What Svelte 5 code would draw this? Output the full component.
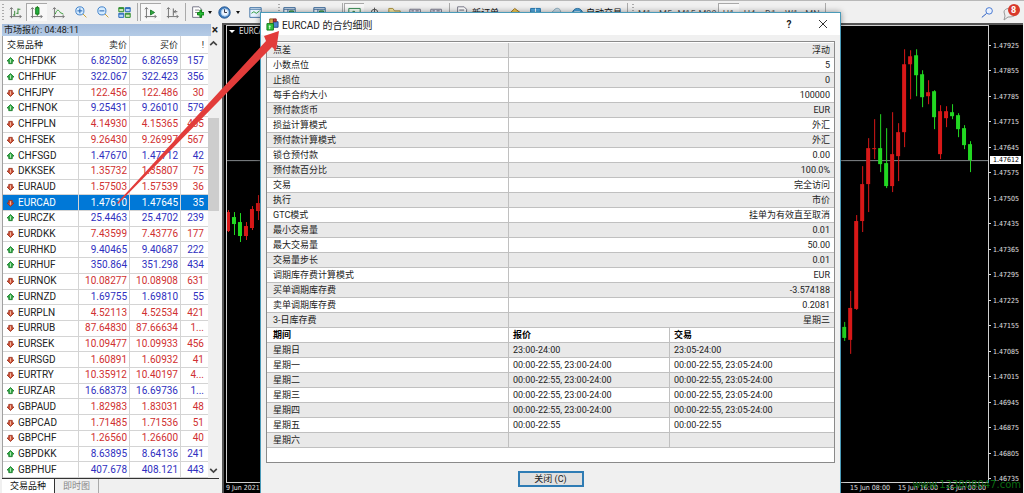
<script>

  let symbols = [
    ["CHFDKK", "6.82502", "6.82659", "157", "up"],
    ["CHFHUF", "322.067", "322.423", "356", "up"],
    ["CHFJPY", "122.456", "122.486", "30", "down"],
    ["CHFNOK", "9.25431", "9.26010", "579", "up"],
    ["CHFPLN", "4.14930", "4.15365", "435", "down"],
    ["CHFSEK", "9.26430", "9.26997", "567", "down"],
    ["CHFSGD", "1.47670", "1.47712", "42", "up"],
    ["DKKSEK", "1.35732", "1.35807", "75", "down"],
    ["EURAUD", "1.57503", "1.57539", "36", "down"],
    ["EURCAD", "1.47610", "1.47645", "35", "down"],
    ["EURCZK", "25.4463", "25.4702", "239", "up"],
    ["EURDKK", "7.43599", "7.43776", "177", "down"],
    ["EURHKD", "9.40465", "9.40687", "222", "up"],
    ["EURHUF", "350.864", "351.298", "434", "up"],
    ["EURNOK", "10.08277", "10.08908", "631", "down"],
    ["EURNZD", "1.69755", "1.69810", "55", "up"],
    ["EURPLN", "4.52113", "4.52534", "421", "down"],
    ["EURRUB", "87.64830", "87.66634", "1...", "down"],
    ["EURSEK", "10.09477", "10.09933", "456", "down"],
    ["EURSGD", "1.60891", "1.60932", "41", "down"],
    ["EURTRY", "10.35912", "10.40197", "4...", "down"],
    ["EURZAR", "16.68373", "16.69736", "1...", "up"],
    ["GBPAUD", "1.82983", "1.83031", "48", "down"],
    ["GBPCAD", "1.71485", "1.71536", "51", "down"],
    ["GBPCHF", "1.26560", "1.26600", "40", "down"],
    ["GBPDKK", "8.63895", "8.64136", "241", "up"],
    ["GBPHUF", "407.678", "408.121", "443", "up"],
  ]

  let selected = $state("EURCAD")

  let specs = [
    ["点差", "浮动"],
    ["小数点位", "5"],
    ["止损位", "0"],
    ["每手合约大小", "100000"],
    ["预付款货币", "EUR"],
    ["损益计算模式", "外汇"],
    ["预付款计算模式", "外汇"],
    ["锁仓预付款", "0.00"],
    ["预付款百分比", "100.0%"],
    ["交易", "完全访问"],
    ["执行", "市价"],
    ["GTC模式", "挂单为有效直至取消"],
    ["最小交易量", "0.01"],
    ["最大交易量", "50.00"],
    ["交易量步长", "0.01"],
    ["调期库存费计算模式", "EUR"],
    ["买单调期库存费", "-3.574188"],
    ["卖单调期库存费", "0.2081"],
    ["3-日库存费", "星期三"],
  ]

  let sessions = [
    ["星期日", "23:00-24:00", "23:05-24:00"],
    ["星期一", "00:00-22:55, 23:00-24:00", "00:00-22:55, 23:05-24:00"],
    ["星期二", "00:00-22:55, 23:00-24:00", "00:00-22:55, 23:05-24:00"],
    ["星期三", "00:00-22:55, 23:00-24:00", "00:00-22:55, 23:05-24:00"],
    ["星期四", "00:00-22:55, 23:00-24:00", "00:00-22:55, 23:05-24:00"],
    ["星期五", "00:00-22:55", "00:00-22:55"],
    ["星期六", "", ""],
  ]

  // x, high, low, body top, body bottom, rising (red) or falling (green)
  let candles = [
    [227, 210, 232, 212, 231, "r"],
    [233, 212, 235, 217, 224, "g"],
    [239, 213, 242, 222, 236, "g"],
    [245, 222, 240, 226, 236, "r"],
    [251, 206, 230, 209, 228, "r"],
    [257, 195, 220, 203, 211, "r"],
    [844, 322, 341, 327, 338, "g"],
    [850, 291, 354, 308, 340, "r"],
    [856, 215, 310, 221, 309, "r"],
    [862, 166, 232, 184, 221, "r"],
    [868, 138, 212, 148, 184, "r"],
    [874, 119, 159, 148, 149, "r"],
    [880, 114, 172, 148, 164, "g"],
    [886, 128, 188, 163, 186, "g"],
    [892, 112, 192, 154, 186, "r"],
    [898, 123, 181, 132, 156, "r"],
    [904, 49, 147, 64, 132, "r"],
    [910, 50, 99, 56, 64, "r"],
    [916, 49, 96, 55, 75, "g"],
    [922, 70, 107, 74, 97, "g"],
    [928, 80, 104, 92, 96, "r"],
    [934, 90, 129, 91, 117, "g"],
    [940, 105, 159, 111, 154, "r"],
    [946, 106, 127, 111, 118, "r"],
    [952, 104, 119, 112, 116, "g"],
    [958, 113, 137, 115, 129, "g"],
    [964, 125, 149, 128, 145, "g"],
    [970, 141, 172, 144, 160, "g"],
  ]

  let prices = []
  for (let p = 147925; p >= 146735; p -= 70) {
    prices.push((p / 100000).toFixed(5))
  }

  // every icon is a list of [path, fill, stroke] on a 16 x 16 grid
  const axes = ["M3 2v13M1 13h14M1 4l2-2 2 2M13 11l2 2-2 2", "none", "#777"]
  const doc = ["M2 1h8l3 3v10h-11z", "#fff", "#778"]

  const icons = {
    bars: [axes, ["M7 6v6M7 11h-2M11 3v7M11 4h3M11 9h-2", "none", "#3a8a3a"]],
    candle: [axes, ["M9 0v12", "none", "#187818"], ["M7 2h4v8h-4z", "#20b040", "#187818"]],
    line: [axes, ["M4 10c2-6 4-6 6-2l4 2", "none", "#3a9a3a"]],
    zoomin: [["M9 9l5 5", "none", "#c8a030"], ["M1 6a5 5 0 1 1 10 0a5 5 0 1 1-10 0", "#d6ecff", "#3f7fc8"], ["M3 6h6M6 3v6", "none", "#2060b0"]],
    zoomout: [["M9 9l5 5", "none", "#c8a030"], ["M1 6a5 5 0 1 1 10 0a5 5 0 1 1-10 0", "#d6ecff", "#3f7fc8"], ["M3 6h6", "none", "#2060b0"]],
    tiles: [["M1 2h6v5h-6zM9 9h6v5h-6z", "#cfe8b8", "#2a8a2a"], ["M9 2h6v5h-6zM1 9h6v5h-6z", "#bcd8f8", "#2868b8"], ["M1 3h6M9 10h6", "none", "#2a8a2a"], ["M9 3h6M1 10h6", "none", "#2868b8"]],
    shift: [axes, ["M8 5l5 3-5 3z", "#30a840", "#208030"]],
    scroll: [axes, ["M9 3v9M14 7h-4M12 5l-2 2 2 2", "none", "#666"]],
    add: [doc, ["M5 5h5M5 8h3", "none", "#888"], ["M8 8h3v-3h2v3h3v3h-3v3h-2v-3h-3z", "#28c038", "#108018"]],
    order: [doc, ["M4 5h6M4 8h6M4 11h4", "none", "#667"]],
    clock: [["M1 8a7 7 0 1 1 14 0a7 7 0 1 1-14 0", "#3d7cc0", "#285890"], ["M4 8a4 4 0 1 1 9 0a4 4 0 1 1-9 0", "#eaf4ff", "#a8c8e8"], ["M8 4v4h3", "none", "#334"]],
    template: [["M1 2h14v12h-14z", "#e8f2ff", "#4878a8"], ["M1 4h14", "none", "#4878a8"], ["M3 9l3-2 3 2 4-3", "none", "#30a040"]],
    panel: [["M1 2h14v12h-14z", "#f4faff", "#3a6898"], ["M1 4h14M6 4v10", "none", "#3a6898"], ["M8 6h5v5h-5z", "#50b060", "#308040"]],
    picture: [["M1 3h14v11h-14z", "#f4fff4", "#348850"], ["M3 10l4-4 4 4z", "#50b060", "#308040"]],
    target: [["M8 2v13M2 8h12", "none", "#555"], ["M4 8a4 4 0 1 1 8 0a4 4 0 1 1-8 0", "none", "#555"]],
    folder: [["M1 3h5l2 3h7v8h-14z", "#f8e8a0", "#a89040"]],
    tester: [["M1 4h13v10h-13z", "#eef", "#778"], ["M3 6h3M8 6h4M3 9h8", "none", "#667"]],
    diamond: [["M1 9l6-6 8 6-5 6z", "#f4cc50", "#987020"]],
    book: [["M2 3h12v10h-12z", "#50a8e0", "#2878b0"], ["M8 3v10", "none", "#fff"]],
    cloud: [["M2 12c-2-5 2-5 3-7c3-4 8-2 8 2c3 1 2 5 0 5z", "#c8dce8", "#8aa8b8"]],
    robot: [["M1 13c0-5 2-10 7-10s7 5 7 10z", "#4aa0d8", "#2870a0"], ["M4 7h7", "none", "#d8f0ff"]],
    search: [["M7 9l-6 5", "none", "#2458c0"], ["M6 6a4 4 0 1 1 8 0a4 4 0 1 1-8 0", "#eaf2ff", "#4878d0"]],
  }

  let toolbar = [
    { grip: true, w: 5 },
    { icon: "bars", w: 21, name: "柱状图" },
    { icon: "candle", w: 21, on: true, name: "蜡烛图" },
    { icon: "line", w: 22, name: "折线图" },
    { icon: "zoomin", w: 24, name: "放大" },
    { icon: "zoomout", w: 21, name: "缩小" },
    { icon: "tiles", w: 21, name: "平铺窗口" },
    { sep: true, w: 5 },
    { icon: "shift", w: 21, on: true, name: "自动滚动" },
    { icon: "scroll", w: 22, name: "图表平移" },
    { sep: true, w: 5 },
    { icon: "add", w: 18, name: "技术指标" },
    { caret: true, w: 8 },
    { icon: "clock", w: 20, name: "时间周期" },
    { caret: true, w: 8 },
    { icon: "template", w: 26, name: "模板" },
    { space: true, w: 8 },
    { grip: true, w: 4 },
    { icon: "panel", w: 18, name: "市场报价" },
    { icon: "panel", w: 42, name: "数据窗口" },
    { sep: true, w: 4 },
    { icon: "picture", w: 20, on: true, name: "导航" },
    { icon: "target", w: 20, name: "十字准线" },
    { icon: "folder", w: 20, name: "收藏" },
    { icon: "tester", w: 22, name: "终端" },
    { icon: "tester", w: 20, name: "策略测试" },
    { sep: true, w: 6 },
    { icon: "order", w: 20, text: "新订单", name: "新订单", tw: 32 },
    { icon: "diamond", w: 22, name: "编辑器" },
    { icon: "book", w: 18, name: "历史" },
    { icon: "cloud", w: 24, name: "社区" },
    { icon: "robot", w: 18, text: "自动交易", name: "自动交易", tw: 38 },
    { sep: true, w: 6 },
    { grip: true, w: 4 },
    { text: "M1", tw: 21 },
    { text: "M5", tw: 21 },
    { text: "M15", tw: 21 },
    { text: "M30", tw: 21 },
    { text: "H1", tw: 21, on: true },
    { text: "H4", tw: 21 },
    { text: "D1", tw: 21 },
    { text: "W1", tw: 21 },
    { text: "MN", tw: 21 },
    { sep: true, w: 5 },
  ]

</script>

{#snippet glyph(name)}
  <svg class="glyph" viewBox="0 0 16 16">
    {#each icons[name] as [d, fill, stroke]}
      <path {d} {fill} {stroke} stroke-width="1.2" />
    {/each}
  </svg>
{/snippet}

<div class="page">

  <div class="toolbar">
    {#each toolbar as item}
      {#if item.grip}
        <span class="grip" style="width: {item.w}px"></span>
      {:else if item.sep}
        <span class="sep" style="width: {item.w}px"></span>
      {:else if item.space}
        <span style="width: {item.w}px"></span>
      {:else if item.caret}
        <span class="caret" style="width: {item.w}px"><i></i></span>
      {:else}
        <button class="tool" class:on={item.on} class:period={!item.icon} aria-label={item.name} style="width: {(item.w || 0) + (item.tw || 0)}px">
          {#if item.icon}
            <span class="tool-icon" style="width: {item.w}px">{@render glyph(item.icon)}</span>
          {/if}
          {#if item.text}<span>{item.text}</span>{/if}
        </button>
      {/if}
    {/each}
    <div class="right-tools">
      <button class="tool" aria-label="搜索">{@render glyph("search")}</button>
      <button class="tool alerts" aria-label="消息">
        <svg viewBox="0 0 20 18">
          <path d="M2 9c0-5 12-5 12 1c0 4-6 4-8 4l-4 3 1-4z" fill="#eee" stroke="#999" />
          <circle cx="12" cy="7" r="6" fill="#d8392a" />
        </svg>
        <span class="count">8</span>
      </button>
    </div>
  </div>

  <div class="main">

    <div class="market">
      <div class="market-title">
        <span class="market-name">市场报价: 04:48:11</span>
        <button class="market-close" aria-label="关闭">×</button>
      </div>

      <div class="market-body">
        <table class="symbols">
          <thead>
            <tr>
              <th class="symbol">交易品种</th>
              <th class="price">卖价</th>
              <th class="price">买价</th>
              <th class="spread">!</th>
            </tr>
          </thead>
          <tbody>
            {#each symbols as [name, bid, ask, spread, dir]}
              <tr class={dir} class:selected={name == selected} onclick={() => selected = name}>
                <td class="symbol">
                  <svg class="dir" viewBox="0 0 8 8">
                    {#if dir == "up"}
                      <path d="M4 0l4 4h-2v3h-4v-3h-2z" fill="#35b04a" stroke="#1c7a2c" />
                      <path d="M4 2v4" stroke="#c8f0c8" />
                    {:else}
                      <path d="M4 8l4-4h-2v-3h-4v3h-2z" fill="#d2553a" stroke="#9c3420" />
                      <path d="M4 2v4" stroke="#f4c8b0" />
                    {/if}
                  </svg>{name}
                </td>
                <td>{bid}</td>
                <td>{ask}</td>
                <td>{spread}</td>
              </tr>
            {/each}
          </tbody>
        </table>

        <div class="scrollbar">
          <svg viewBox="0 0 10 10"><path d="M2 7l3-3 3 3" /></svg>
          <div class="before"></div>
          <div class="thumb"></div>
          <div class="after"></div>
          <svg viewBox="0 0 10 10"><path d="M2 3l3 3 3-3" /></svg>
        </div>
      </div>

      <div class="tabs">
        <button class="tab active">交易品种</button>
        <button class="tab">即时图</button>
      </div>
    </div>

    <div class="chart">
      <div class="chart-body">
        <div class="plot">
          <svg viewBox="226 26 762 456">
            <path d="M226 160.500h762" stroke="#84888c" />
            {#each candles as [x, high, low, top, bottom, kind]}
              <g class={kind}>
                <rect {x} y={high} width="1" height={low - high} />
                <rect x={x - 2} y={top} width="4" height={bottom - top} />
              </g>
            {/each}
          </svg>
          <span class="chart-name"><i></i>EURCAD</span>
        </div>
        <div class="axis">
          {#each prices as price}
            <span>{price}</span>
          {/each}
          <b class="current">1.47612</b>
        </div>
      </div>
      <div class="times">
        <span class="first">9 Jun 2021</span>
        <span>15 Jun 08:00</span>
        <span>15 Jun 16:00</span>
        <span>16 Jun 00:00</span>
      </div>
      <span class="watermark">www.123808047.com</span>
    </div>

  </div>

  <div class="dialog" role="dialog" aria-labelledby="dialog-title">
    <div class="dialog-title">
      <svg class="dialog-icon" viewBox="0 0 14 14">
        <path d="M4 1h4v5h-4z" fill="#d8a850" stroke="#8a5a20" />
        <path d="M8 4h5v6h-5z" fill="#4a86d0" stroke="#244c88" />
        <path d="M8 1h3v3h-3z" fill="#cc4040" stroke="#802020" />
        <path d="M1 6h7v7h-7z" fill="#35c23c" stroke="#167a1c" />
        <path d="M4 8v4M3 9h2" stroke="#e0ffe0" />
      </svg>
      <span id="dialog-title">EURCAD 的合约细则</span>
      <button class="help" aria-label="帮助">?</button>
      <button class="close" aria-label="关闭">
        <svg viewBox="0 0 10 10"><path d="M1 1l8 8M9 1l-8 8" stroke="#333" /></svg>
      </button>
    </div>

    <div class="dialog-body">
      <div class="list">
        <table>
          <tbody>
            {#each specs as [label, value]}
              <tr>
                <td class="label">{label}</td>
                <td class="value">{value}</td>
              </tr>
            {/each}
          </tbody>
        </table>
        <table class="sessions">
          <thead>
            <tr>
              <th class="label">期间</th>
              <th>报价</th>
              <th>交易</th>
            </tr>
          </thead>
          <tbody>
            {#each sessions as [day, quotes, trades]}
              <tr>
                <td class="label">{day}</td>
                <td>{quotes}</td>
                <td>{trades}</td>
              </tr>
            {/each}
          </tbody>
        </table>
      </div>
      <button class="ok">关闭 (C)</button>
    </div>
  </div>

  <svg class="arrow" viewBox="0 0 164 174">
    <path d="M0 172L149 10L147 5L162 0L159 20L155 16L1 173z" fill="#e23c3a" />
  </svg>

</div>


<style>

  :global(body) {
    margin: 0;
  }

  .page {
    position: relative;
    display: flex;
    flex-direction: column;
    height: 100vh;
    overflow: hidden;
    background-color: #f0f0f0;
    color: #222;
    font-family: "Roboto", "Noto Sans CJK SC", sans-serif;
    font-size: 9px;
  }

  button {
    padding: 0;
    border: none;
    background: none;
    color: inherit;
    font: inherit;
  }

  table {
    width: 100%;
    border-spacing: 0;
    table-layout: fixed;
  }

  th, td {
    overflow: hidden;
    padding: 0;
    white-space: nowrap;
  }

  /* toolbar */

  .toolbar {
    display: flex;
    flex: none;
    align-items: center;
    box-sizing: border-box;
    height: 23px;
    border-top: 1px solid #b8b8b8;
  }

  .toolbar > * {
    flex: none;
  }

  .tool {
    display: flex;
    align-items: center;
    box-sizing: border-box;
    height: 18px;
    color: #111;
    white-space: nowrap;
  }

  .tool.on {
    background-color: #f8f8f8;
    box-shadow: inset 1px 1px #a8a8a8;
  }

  .tool.period {
    justify-content: center;
    padding-top: 3px;
    color: #555;
  }

  .tool-icon {
    display: flex;
    justify-content: center;
  }

  .glyph {
    width: 13px;
    height: 13px;
  }

  .grip {
    height: 16px;
    background: repeating-linear-gradient(#aaa 0 1px, transparent 1px 3px) 2px 0 / 2px 100% no-repeat;
  }

  .sep {
    height: 18px;
    background: linear-gradient(#aaa, #aaa) 50% 0 / 1px 100% no-repeat;
  }

  .caret i {
    display: block;
    width: 0;
    margin: 0 auto;
    border: 2px solid transparent;
    border-top: 3px solid #111;
    border-bottom: none;
  }

  .right-tools {
    display: flex;
    gap: 8px;
    margin-left: auto;
    padding-right: 2px;
  }

  .alerts {
    position: relative;
  }

  .alerts svg {
    width: 20px;
    height: 18px;
  }

  .count {
    position: absolute;
    top: 1px;
    left: 9px;
    color: white;
    font-weight: bold;
    line-height: 12px;
  }

  /* market watch */

  .main {
    display: flex;
    flex: 1;
    min-height: 0;
  }

  .market {
    display: flex;
    flex: none;
    flex-direction: column;
    box-sizing: border-box;
    width: 222px;
    padding: 1px 3px 0 2px;
  }

  .market-title {
    display: flex;
    flex: none;
    height: 12px;
    line-height: 12px;
  }

  .market-name {
    flex: 1;
    padding-left: 2px;
    background: linear-gradient(#a4bcdc, #b4cbe6);
  }

  .market-close {
    width: 8px;
    font-size: 12px;
    font-weight: bold;
  }

  .market-body {
    display: flex;
    flex: 1;
    min-height: 0;
  }

  .symbols {
    flex: 1;
    height: 100%;
    border-left: 1px solid #a0a0a0;
    background-color: white;
    font-size: 10px;
  }

  .symbols th {
    height: 17px;
    font-size: 9px;
    font-weight: normal;
  }

  .symbols th, .symbols td {
    padding-right: 2px;
    border-right: 1px solid #d4d4d4;
    border-bottom: 1px solid #d4d4d4;
    line-height: 12px;
    text-align: right;
  }

  .symbols .symbol {
    padding-left: 4px;
    color: #222;
    text-align: left;
  }

  .symbols th:last-child, .symbols td:last-child {
    padding-right: 4px;
    border-right: none;
  }

  .symbols th.price {
    width: 48px;
  }

  .symbols th.spread {
    width: 23px;
  }

  .up {
    color: #3030c0;
  }

  .down {
    color: #d03030;
  }

  .selected, .symbols .selected .symbol {
    background-color: #0078d7;
    color: white;
  }

  .dir {
    width: 7px;
    height: 8px;
    margin-right: 4px;
    vertical-align: -1px;
    overflow: visible;
  }

  .scrollbar {
    display: flex;
    flex: none;
    flex-direction: column;
    width: 11px;
  }

  .scrollbar svg {
    flex: none;
    height: 14px;
    fill: none;
    stroke: #444;
    stroke-width: 1.5;
  }

  .before {
    flex: 17;
  }

  .thumb {
    flex: 23;
    background-color: #cdcdcd;
  }

  .after {
    flex: 63;
  }

  .tabs {
    display: flex;
    flex: none;
    height: 14px;
    border-top: 1px solid #333;
  }

  .tab {
    padding: 0 8px;
    color: #888;
    line-height: 14px;
  }

  .tab + .tab {
    border-right: 1px solid #aaa;
  }

  .tab.active {
    border-right: 1px solid #333;
    background-color: white;
    color: #111;
  }

  /* chart */

  .chart {
    position: relative;
    display: flex;
    flex: 1;
    flex-direction: column;
    margin-right: 1px;
    border-top: 2px solid #555;
    border-left: 2px solid #555;
    background-color: black;
    color: #e0e0e0;
    font-family: "DejaVu Sans Condensed", "DejaVu Sans", sans-serif;
    font-size: 7px;
  }

  .chart-body {
    display: flex;
    flex: 1;
    min-height: 0;
    margin-left: 2px;
  }

  .plot {
    position: relative;
    flex: 1;
    border: 1px solid #d0d0d0;
  }

  .plot svg {
    display: block;
    width: 100%;
    height: 100%;
  }

  .r {
    fill: #d81818;
  }

  .g {
    fill: #22d822;
  }

  .chart-name {
    position: absolute;
    top: 1px;
    left: 2px;
    font-size: 8px;
  }

  .chart-name i {
    display: inline-block;
    margin: 0 4px 1px 0;
    border: 3px solid transparent;
    border-top-color: white;
    border-bottom: none;
  }

  .axis {
    position: relative;
    display: flex;
    flex: none;
    flex-direction: column;
    justify-content: space-between;
    width: 34px;
    padding-top: 17px;
    line-height: 8px;
  }

  .axis span::before {
    display: inline-block;
    width: 2px;
    height: 1px;
    margin-right: 2px;
    background-color: #ddd;
    vertical-align: 2px;
    content: "";
  }

  .current {
    position: absolute;
    top: 131px;
    left: 1px;
    padding-left: 3px;
    width: 28px;
    background-color: white;
    color: black;
    font-weight: normal;
  }

  .times {
    display: flex;
    flex: none;
    height: 10px;
    padding-right: 29px;
    line-height: 11px;
  }

  .times span {
    width: 48px;
    white-space: nowrap;
  }

  .times .first {
    flex: 1;
    padding-left: 2px;
  }

  .watermark {
    position: absolute;
    right: 2px;
    bottom: 2px;
    color: #0a6a10;
    font-family: "DejaVu Sans", sans-serif;
    font-size: 10px;
    line-height: 12px;
  }

  /* contract specification window */

  .dialog {
    position: absolute;
    top: 12px;
    right: 183px;
    bottom: -8px;
    left: 260px;
    display: flex;
    flex-direction: column;
    border: 1px solid #4a9ab8;
    background-color: #f0f0f0;
    box-shadow: 0 0 6px rgba(0, 0, 0, 0.4);
  }

  .dialog-title {
    display: flex;
    align-items: center;
    height: 22px;
    padding: 0 12px 0 5px;
    background-color: white;
    font-size: 10px;
  }

  .dialog-icon {
    width: 13px;
    height: 13px;
    margin-right: 3px;
  }

  .help {
    width: 12px;
    margin-left: auto;
    font-weight: bold;
  }

  .close {
    display: flex;
    margin-left: 23px;
  }

  .close svg {
    width: 10px;
    height: 10px;
  }

  .dialog-body {
    display: flex;
    flex-direction: column;
    align-items: center;
    gap: 8px;
    padding: 6px 5px 0;
  }

  .list {
    align-self: stretch;
    padding: 1px 0 14px;
    border: 1px solid #8a8a8a;
    background-color: white;
  }

  .list th, .list td {
    height: 14px;
    padding: 0 4px;
    border-right: 1px solid #c0c0c0;
    border-bottom: 1px solid #c0c0c0;
    line-height: 14px;
    text-align: left;
  }

  .list th:last-child, .list td:last-child {
    border-right: none;
  }

  .list th {
    color: black;
  }

  .list .label {
    width: 231px;
    padding-left: 6px;
  }

  .list .value {
    text-align: right;
  }

  .list tbody tr:nth-child(odd) {
    background-color: #e9e9e9;
  }

  .sessions th:nth-child(2) {
    width: 152px;
  }

  .ok {
    width: 66px;
    height: 16px;
    border: 2px solid #2f7cb4;
    background-color: #e1e1e1;
    line-height: 12px;
  }

  .arrow {
    position: absolute;
    top: 31px;
    left: 117px;
    width: 164px;
    height: 174px;
    pointer-events: none;
  }

</style>
